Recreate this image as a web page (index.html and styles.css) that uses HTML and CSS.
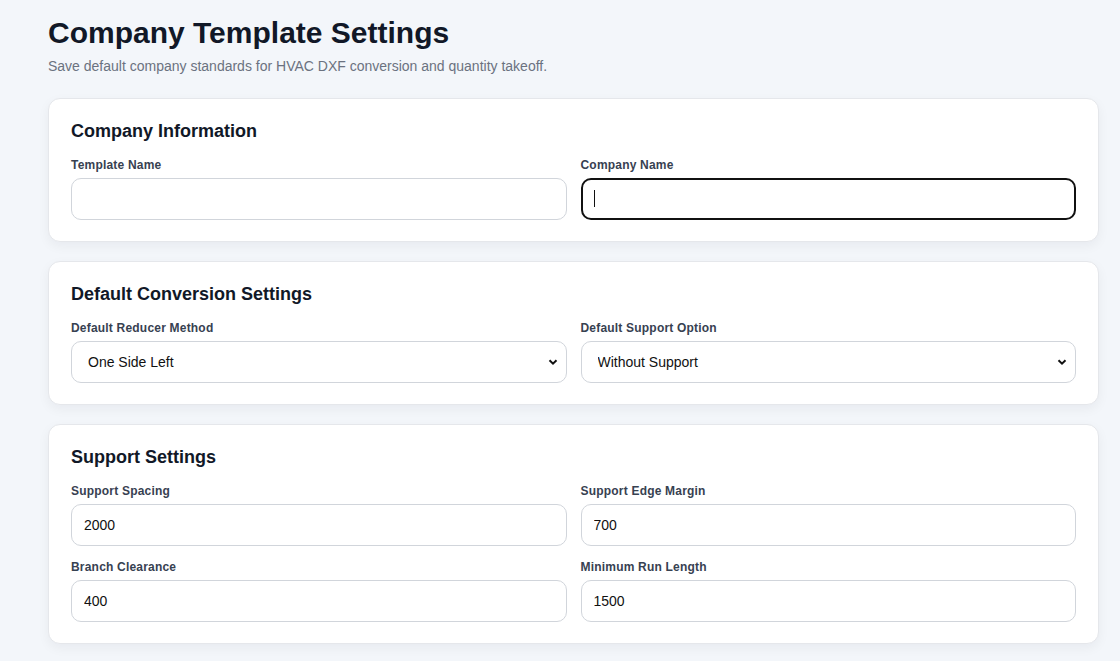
FILE: index.html
```html
<!DOCTYPE html>
<html lang="en">
<head>
  <meta charset="UTF-8" />
  <meta name="viewport" content="width=device-width, initial-scale=1.0" />
  <title>Company Template Settings</title>
  <link rel="stylesheet" href="styles.css">
</head>
<body>
  <main class="page">
    <header class="page-head">
      <h1>Company Template Settings</h1>
      <p class="subtitle">Save default company standards for HVAC DXF conversion and quantity takeoff.</p>
    </header>

    <section class="card">
      <h2>Company Information</h2>
      <div class="grid">
        <label class="field">
          <span>Template Name</span>
          <input type="text" value="">
        </label>
        <label class="field">
          <span>Company Name</span>
          <div class="input-wrap">
            <input type="text" class="active" value="">
            <i class="caret"></i>
          </div>
        </label>
      </div>
    </section>

    <section class="card">
      <h2>Default Conversion Settings</h2>
      <div class="grid">
        <label class="field">
          <span>Default Reducer Method</span>
          <div class="select-wrap">
            <select>
              <option>One Side Left</option>
              <option>One Side Right</option>
              <option>Center</option>
            </select>
            <svg class="chevron" viewBox="0 0 10 10" width="10" height="10"><path d="M1.5 3.2 5 6.7 8.5 3.2" fill="none" stroke="#111" stroke-width="2"/></svg>
          </div>
        </label>
        <label class="field">
          <span>Default Support Option</span>
          <div class="select-wrap">
            <select>
              <option>Without Support</option>
              <option>With Support</option>
            </select>
            <svg class="chevron" viewBox="0 0 10 10" width="10" height="10"><path d="M1.5 3.2 5 6.7 8.5 3.2" fill="none" stroke="#111" stroke-width="2"/></svg>
          </div>
        </label>
      </div>
    </section>

    <section class="card">
      <h2>Support Settings</h2>
      <div class="grid">
        <label class="field">
          <span>Support Spacing</span>
          <input type="text" value="2000">
        </label>
        <label class="field">
          <span>Support Edge Margin</span>
          <input type="text" value="700">
        </label>
        <label class="field">
          <span>Branch Clearance</span>
          <input type="text" value="400">
        </label>
        <label class="field">
          <span>Minimum Run Length</span>
          <input type="text" value="1500">
        </label>
      </div>
    </section>
  </main>
</body>
</html>
```

FILE: styles.css
```css
body {
  margin: 0;
  background: #f3f6fa;
  color: #111827;
  font-family: "Liberation Sans", Arial, sans-serif;
}

.page {
  width: 1051px;
  margin-left: 48px;
  padding-top: 15px;
}

.page-head h1 {
  margin: 0;
  font-size: 30px;
  line-height: 36px;
  font-weight: bold;
  color: #111827;
}

.subtitle {
  margin: 5px 0 22px;
  font-size: 14px;
  line-height: 20px;
  color: #6b7280;
}

.card {
  background: #fff;
  border: 1px solid #e5e7eb;
  border-radius: 12px;
  box-shadow: 0 4px 12px rgba(15, 23, 42, 0.05);
  padding: 21px 22px;
  margin-bottom: 19px;
}

.card h2 {
  margin: 0 0 16px;
  font-size: 18px;
  line-height: 22px;
  font-weight: bold;
  color: #111827;
}

.grid {
  display: grid;
  grid-template-columns: 1fr 1fr;
  column-gap: 14px;
  row-gap: 14px;
}

.field {
  display: flex;
  flex-direction: column;
  gap: 5px;
}

.field span {
  font-size: 12px;
  line-height: 15px;
  font-weight: bold;
  color: #374151;
  letter-spacing: 0.2px;
}

.field input,
.field select {
  box-sizing: border-box;
  width: 100%;
  height: 42px;
  border: 1px solid #d1d5db;
  border-radius: 10px;
  background: #fff;
  padding: 0 12px;
  font-family: inherit;
  font-size: 14px;
  color: #111;
  outline: none;
}

.field input.active {
  border: 2px solid #111;
  padding: 0 11px;
}

.input-wrap,
.select-wrap {
  position: relative;
}

.caret {
  position: absolute;
  left: 13px;
  top: 12px;
  width: 1px;
  height: 17px;
  background: #111;
}

.field select {
  appearance: none;
  -webkit-appearance: none;
  padding-left: 16px;
}

.chevron {
  position: absolute;
  right: 9px;
  top: 16px;
  pointer-events: none;
}
```
